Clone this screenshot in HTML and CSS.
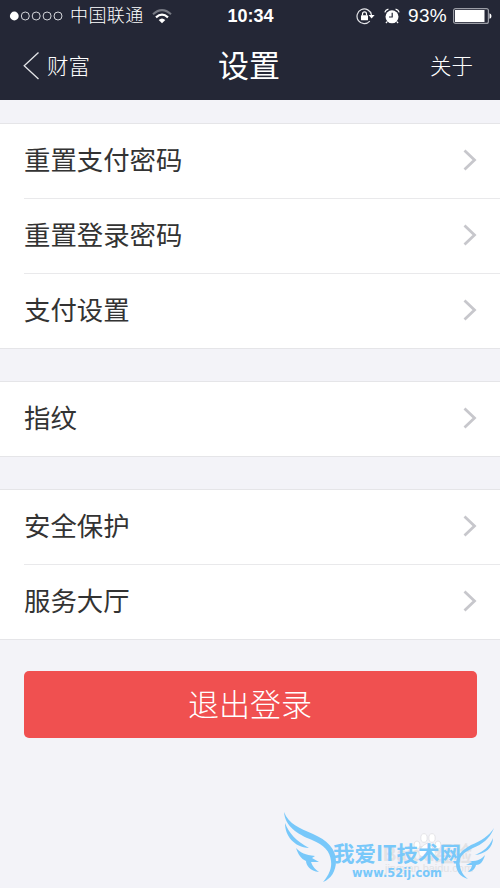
FILE: index.html
```html
<!DOCTYPE html>
<html lang="zh-CN">
<head>
<meta charset="utf-8">
<title>设置</title>
<link rel="stylesheet" href="styles.css">
</head>
<body>
<header class="header">
  <div class="status">
    <div class="status-left">
      <svg class="signal" width="54" height="10" viewBox="0 0 54 10"><circle cx="5.3" cy="5" r="4.4" fill="#fff"/><g fill="none" stroke="#d4d5da" stroke-width="1"><circle cx="16.3" cy="5" r="4"/><circle cx="27.2" cy="5" r="4"/><circle cx="38.1" cy="5" r="4"/><circle cx="49" cy="5" r="4"/></g></svg>
      <span class="carrier">中国联通</span>
      <svg class="wifi" width="20" height="15" viewBox="0 0 20 15" fill="none"><path d="M1 5.3Q10-3 19 5.3" stroke="#777a84" stroke-width="2"/><path d="M4 8.4Q10 3 16 8.4" stroke="#fff" stroke-width="2.2"/><path d="M6.7 11Q10 8 13.3 11L10 14.3Z" fill="#fff"/></svg>
    </div>
    <span class="time">10:34</span>
    <div class="status-right">
      <svg width="19" height="17" viewBox="0 0 19 17" fill="none"><path d="M13.8 13.1A7.3 7.3 0 1 1 15.5 7" stroke="#e3e4e8" stroke-width="1.2"/><path d="M12.6 7H18.600L15.600 10.600Z" fill="#fff"/><rect x="5" y="7.300" width="7" height="5" rx=".5" fill="#fff"/><path d="M6.500 7.500V5.900a2 2 0 0 1 4 0V7.500" stroke="#fff" stroke-width="1.2"/></svg>
      <svg class="alarm" width="16" height="17" viewBox="0 0 16 17" fill="none"><circle cx="8" cy="8.8" r="6.5" fill="#fff"/><path d="M.8 4.4Q1.5 1.8 4.4 1.2M15.2 4.4Q14.5 1.8 11.6 1.2M3.2 13.6 1.9 15M12.8 13.6l1.3 1.4" stroke="#fff" stroke-width="1.2"/><path d="M8.2 4.8V9H5" stroke="#242736" stroke-width="1.2"/></svg>
      <span class="percent">93%</span>
      <svg class="battery" width="39" height="16" viewBox="0 0 39 16"><rect x=".6" y=".6" width="34.8" height="14.8" rx="2" fill="none" stroke="#9b9da5" stroke-width="1.2"/><rect x="2" y="2" width="29.500" height="12" fill="#fff"/><path d="M36.5 5.2q2 .4 2 2.8t-2 2.8z" fill="#fff"/></svg>
    </div>
  </div>
  <nav class="nav">
    <a class="back"><svg width="17" height="28" viewBox="0 0 17 28"><path d="M15.5 .5 1.2 13.7 15.5 27" fill="none" stroke="#e4e5e8" stroke-width="1.3"/></svg><span>财富</span></a>
    <h1>设置</h1>
    <a class="about">关于</a>
  </nav>
</header>
<main>
  <section class="group">
    <a class="row"><span>重置支付密码</span><svg class="chevron" viewBox="0 0 14 22"><path d="m1.500 1.500 10 9.500-10 9.500"/></svg></a>
    <a class="row"><span>重置登录密码</span><svg class="chevron" viewBox="0 0 14 22"><path d="m1.500 1.500 10 9.500-10 9.500"/></svg></a>
    <a class="row"><span>支付设置</span><svg class="chevron" viewBox="0 0 14 22"><path d="m1.500 1.500 10 9.500-10 9.500"/></svg></a>
  </section>
  <section class="group">
    <a class="row"><span>指纹</span><svg class="chevron" viewBox="0 0 14 22"><path d="m1.500 1.500 10 9.500-10 9.500"/></svg></a>
  </section>
  <section class="group">
    <a class="row"><span>安全保护</span><svg class="chevron" viewBox="0 0 14 22"><path d="m1.500 1.500 10 9.500-10 9.500"/></svg></a>
    <a class="row"><span>服务大厅</span><svg class="chevron" viewBox="0 0 14 22"><path d="m1.500 1.500 10 9.500-10 9.500"/></svg></a>
  </section>
  <button class="logout">退出登录</button>
</main>
<svg class="watermark" width="225" height="83" viewBox="0 0 225 83">
  <g class="baidu">
    <text class="baidu-name" x="108" y="56" textLength="89" lengthAdjust="spacingAndGlyphs">Baidu经验</text>
    <text class="baidu-url" x="110" y="67" textLength="88" lengthAdjust="spacingAndGlyphs">jingyan.baidu.com</text>
    <g fill="#fff" stroke="#dedee2" stroke-width=".8"><ellipse cx="142" cy="40" rx="3" ry="4"/><ellipse cx="149" cy="33" rx="3.2" ry="4.3"/><ellipse cx="157" cy="33" rx="3.2" ry="4.3"/><ellipse cx="163" cy="40" rx="3" ry="4"/><path d="M152.500 38Q157 41 160 46Q162 53 153 51Q143 54 144 46Q148 39 152.500 38Z"/></g>
  </g>
  <g class="wings">
    <path d="M9 7C14 19 24 23 38 29C52 35 61 44 61 56C61 66 56 74 48 77C54 70 57 63 56 56C55 46 49 40 37 35C22 29 10 21 9 7Z"/>
    <path d="M10 18C14 28 21 36 34 43C19 42 10 31 10 18Z"/>
    <path d="M21 43C26 48 30 50 40 51L37 53 44 57 36 57Q38 63 44 67C35 66 31 60 31 56C26 54 23 49 21 43Z"/>
    <path d="M219 23C214 35 207 39 198 43C187 48 183 53 185 61C186 67 189 71 193 74C185 72 181 66 181 59C181 51 187 45 196 40C206 36 214 31 219 23Z"/>
    <path d="M218 33C218 43 210 49 200 50C209 46 214 42 218 33Z"/>
    <path d="M210 50C208 57 205 60 201 60C200 64 197 67 193 67Q197 63 197 60L191 60 197 57 195 56C204 56 206 54 210 50Z"/>
  </g>
  <text class="site-name" x="58" y="56" textLength="128" lengthAdjust="spacingAndGlyphs">我爱IT技术网</text>
  <text class="site-url" x="77" y="72" textLength="90" lengthAdjust="spacingAndGlyphs">www.52ij.com</text>
</svg>
</body>
</html>
```
FILE: styles.css
```css
* { box-sizing: border-box; }
body {
  margin: 0;
  height: 888px;
  position: relative;
  overflow: hidden;
  background: #f3f3f8;
  color: #333;
  font-family: "Liberation Sans", "Noto Sans CJK SC", sans-serif;
}
.header { height: 100px; background: #242736; color: #fff; }
.status {
  height: 32px;
  padding: 0 8px 0 9px;
  display: grid;
  grid-template-columns: 1fr auto 1fr;
  align-items: center;
}
.status-left, .status-right { display: flex; align-items: center; }
.status-right { justify-content: flex-end; }
.carrier { margin-left: 7px; font-size: 18px; font-weight: 300; letter-spacing: .4px; line-height: 32px; }
.wifi { margin-left: 8px; }
.time { font-size: 18px; font-weight: bold; }
.alarm { margin-left: 9px; }
.percent { margin-left: 8px; font-size: 19px; letter-spacing: .3px; }
.battery { margin-left: 6px; }
.nav {
  height: 68px;
  padding: 0 27px 0 23px;
  display: grid;
  grid-template-columns: 1fr auto 1fr;
  align-items: center;
  font-weight: 300;
}
.back { display: flex; align-items: center; gap: 7px; font-size: 21.500px; }
.back span, .about { padding-bottom: 4px; }
h1 { margin: 0; padding: 0 0 6px 2px; font-size: 31px; font-weight: 400; }
.about { justify-self: end; font-size: 21.500px; }
main { padding-top: 23px; }
.group {
  margin-bottom: 32px;
  border-top: 1px solid #e5e5e8;
  border-bottom: 1px solid #e5e5e8;
  background: #fff;
}
.row {
  height: 74px;
  margin-left: 24px;
  padding: 0 23px 2px 0;
  display: flex;
  justify-content: space-between;
  align-items: center;
  font-size: 26.400px;
}
.row span { padding-bottom: 4px; }
.row + .row { height: 75px; border-top: 1px solid #e9e9eb; }
.chevron { width: 14px; height: 22px; fill: none; stroke: #c7c7cc; stroke-width: 2.800px; }
.logout {
  display: block;
  width: 453px;
  height: 67px;
  margin: -1px auto 0;
  padding: 0 0 5px;
  border: 0;
  border-radius: 5px;
  background: #f05050;
  color: #fff;
  font: 300 31px "Noto Sans CJK SC", sans-serif;
}
.watermark { position: absolute; left: 275px; top: 805px; }
.baidu-name { font: bold 21px "Liberation Sans", "Noto Sans CJK SC", sans-serif; fill: #e2e2e5; }
.baidu-url { font: 11px "Liberation Sans", sans-serif; fill: #e2e2e5; }
.wings { fill: #78c8fa; }
.site-name { font: bold 21px "Noto Sans CJK SC", sans-serif; fill: #78c8fa; }
.site-url { font: bold 12.500px "DejaVu Sans", sans-serif; fill: #78c8fa; }
```
